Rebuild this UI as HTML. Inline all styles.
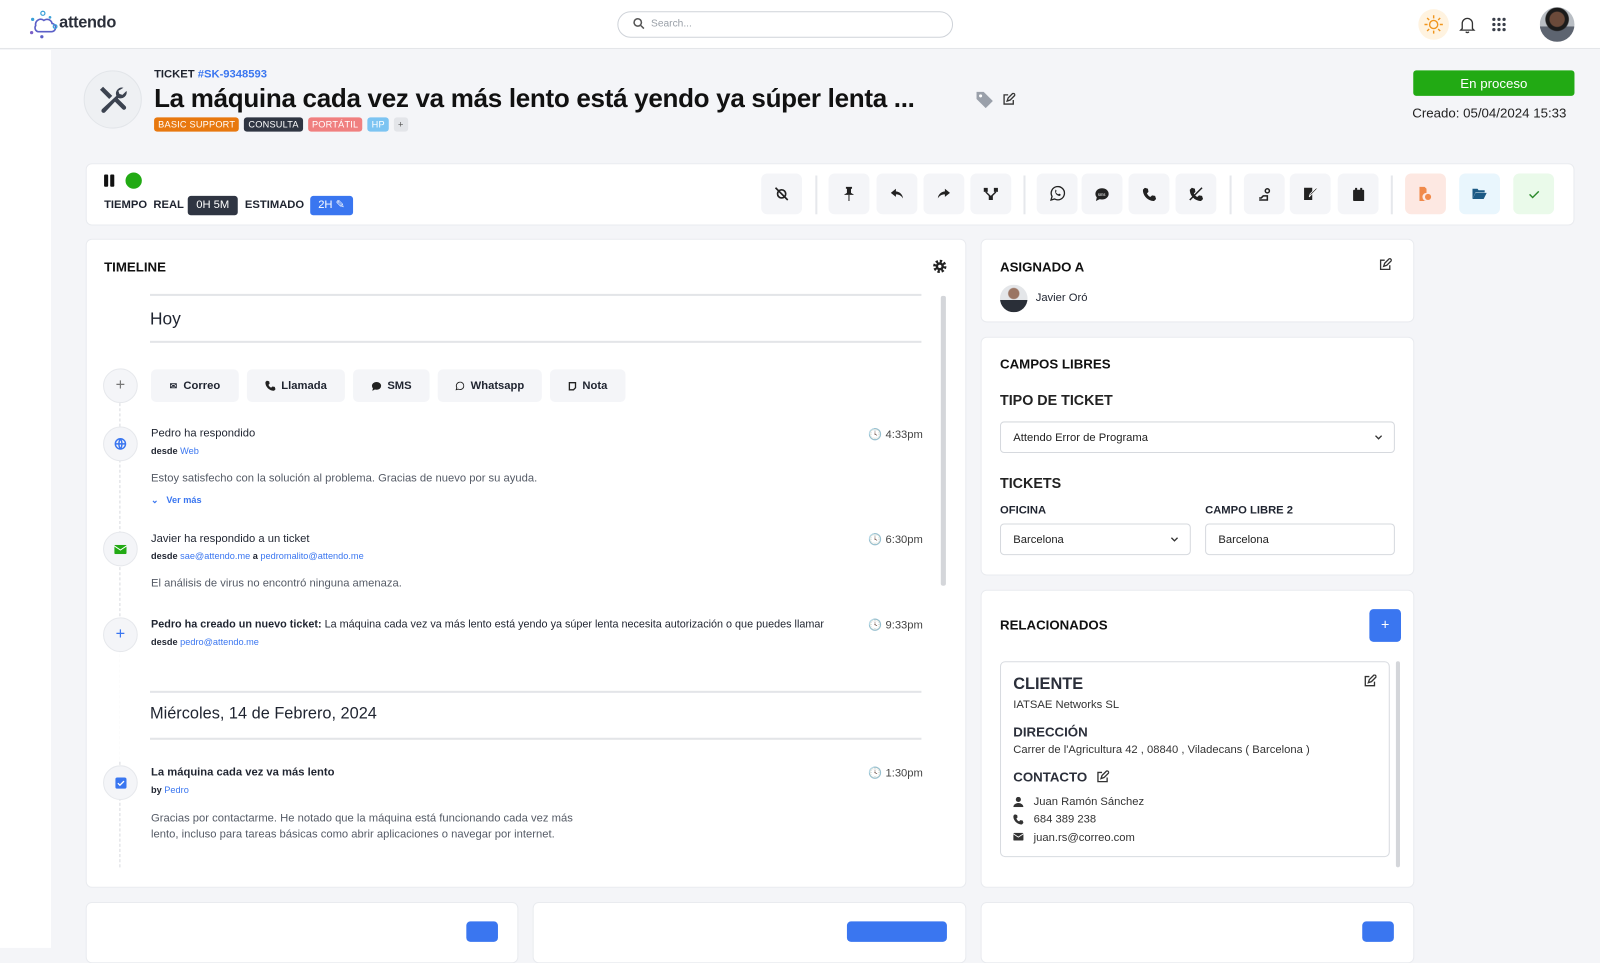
<!DOCTYPE html>
<html><head><meta charset="utf-8"><style>
*{box-sizing:border-box;margin:0;padding:0}
body{width:1600px;height:929px;overflow:hidden;background:#f4f5f8;font-family:"Liberation Sans",sans-serif;color:#1f2430;position:relative}
#w{position:absolute;left:0;top:0;width:1568px;height:911px;transform:scale(1.0204);transform-origin:0 0}
.a{position:absolute}
.card{position:absolute;background:#fff;border:1px solid #e9ebef;border-radius:6px}
.tag{display:inline-block;font-size:9px;padding:2px 4px;border-radius:3px;color:#fff;margin-right:5px;letter-spacing:.2px}
.tb{position:absolute;top:170px;width:40px;height:40px;border-radius:6px;background:#f4f5f8;display:flex;align-items:center;justify-content:center}
.sep{position:absolute;top:172px;width:2px;height:38px;background:#e6e8ec}
.btn{position:absolute;top:362px;height:32px;background:#f4f5f8;border-radius:5px;font-size:11px;font-weight:bold;display:flex;align-items:center;justify-content:center;gap:6px;color:#1f2430}
.circ{position:absolute;width:34px;height:34px;border-radius:50%;background:#f4f5f8;border:1px solid #e6e8ec;display:flex;align-items:center;justify-content:center;color:#3a76f0;font-size:16px}
.t{position:absolute;font-size:11px;color:#1f2430}
.s{font-size:9px;font-weight:bold}
.lnk{color:#3a76f0;font-weight:normal}
.g{color:#555b66}
.h{position:absolute;font-size:13px;font-weight:bold;color:#111}
.inp{position:absolute;height:31px;border:1px solid #d6d9de;border-radius:4px;font-size:11px;padding:9px 12px;color:#222}
.chev{position:absolute;right:10px;top:9px}
</style></head><body><div id="w">
<!-- header -->
<div class="a" style="left:0;top:0;width:1600px;height:48px;background:#fff;border-bottom:1px solid #e3e5e9"></div>
<svg class="a" style="left:28px;top:10px" width="30" height="28" viewBox="0 0 30 28"><path d="M7 15a5 5 0 0 1 8-5 5 5 0 0 1 8 3 4 4 0 0 1-1 8H9a4 4 0 0 1-2-6z" fill="none" stroke="#5b5fc7" stroke-width="1.6"/><circle cx="14" cy="3" r="2" fill="none" stroke="#3aa0d8" stroke-width="1.2"/><circle cx="4" cy="9" r="1.6" fill="#3aa0d8"/><circle cx="26" cy="16" r="1.8" fill="none" stroke="#3aa0d8" stroke-width="1.2"/><circle cx="3" cy="22" r="1.6" fill="#7b5fc7"/><circle cx="13" cy="26" r="1.6" fill="#5b5fc7"/><circle cx="21" cy="7" r="1.3" fill="#3aa0d8"/></svg>
<div class="a" style="left:58px;top:14px;font-size:16px;font-weight:bold;color:#2b2f3a;letter-spacing:-.3px">attendo</div>
<div class="a" style="left:605px;top:11px;width:329px;height:26px;border:1px solid #cfd3d9;border-radius:13px;font-size:10px;color:#9aa0a8;padding:6px 0 0 32px">Search...</div>
<svg class="a" style="left:620px;top:17px" width="12" height="12" viewBox="0 0 12 12"><circle cx="5" cy="5" r="3.6" fill="none" stroke="#555" stroke-width="1.5"/><path d="M8 8l3 3" stroke="#555" stroke-width="1.5"/></svg>
<div class="a" style="left:1390px;top:9px;width:30px;height:30px;border-radius:50%;background:#fff3e0"></div>
<svg class="a" style="left:1395px;top:14px" width="20" height="20" viewBox="0 0 20 20" stroke="#f0961e" stroke-width="1.4" fill="none"><circle cx="10" cy="10" r="4"/><path d="M10 1v3M10 16v3M1 10h3M16 10h3M3.6 3.6l2 2M14.4 14.4l2 2M3.6 16.4l2-2M14.4 5.6l2-2"/></svg>
<svg class="a" style="left:1430px;top:15px" width="16" height="18" viewBox="0 0 16 18" fill="none" stroke="#333" stroke-width="1.3"><path d="M3 13V8a5 5 0 0 1 10 0v5l1.5 1.5h-13z"/><path d="M6.5 16a1.7 1.7 0 0 0 3 0"/></svg>
<svg class="a" style="left:1462px;top:17px" width="14" height="14" viewBox="0 0 14 14" fill="#3a3f4a"><circle cx="2" cy="2" r="1.6"/><circle cx="7" cy="2" r="1.6"/><circle cx="12" cy="2" r="1.6"/><circle cx="2" cy="7" r="1.6"/><circle cx="7" cy="7" r="1.6"/><circle cx="12" cy="7" r="1.6"/><circle cx="2" cy="12" r="1.6"/><circle cx="7" cy="12" r="1.6"/><circle cx="12" cy="12" r="1.6"/></svg>
<div class="a" style="left:1509px;top:7px;width:34px;height:34px;border-radius:50%;background:radial-gradient(circle at 50% 35%,#6b4a3a 0 7px,#1b1b1b 8px 11px,transparent 12px),linear-gradient(#b9bec4 55%,#5d6470 56%);"></div>
<!-- sidebar -->
<div class="a" style="left:0;top:49px;width:50px;height:880px;background:#fff"></div>

<!-- ticket header -->
<div class="a" style="left:82px;top:69px;width:57px;height:57px;border-radius:50%;background:#eef0f3;border:1px solid #e2e5e9"></div>
<svg class="a" style="left:95px;top:82px" width="30" height="30" viewBox="0 0 30 30" fill="#3c4350"><path d="M3 6l3-3 9 9-3 3z"/><path d="M17 17l3-3 8 8a2.1 2.1 0 0 1-3 3z"/><path d="M26 4a6 6 0 0 0-7 8L5 25a2.1 2.1 0 0 0 3 3l13-14a6 6 0 0 0 8-7l-4 4-3-1-1-3z"/></svg>
<div class="a" style="left:151px;top:67px;font-size:11px;font-weight:bold">TICKET <span style="color:#3a76f0">#SK-9348593</span></div>
<div class="a" style="left:151px;top:83px;font-size:25.5px;font-weight:bold;color:#111;letter-spacing:-.3px">La máquina cada vez va más lento está yendo ya súper lenta ...</div>
<div class="a" style="left:151px;top:115px;font-size:0">
<span class="tag" style="background:#e8780e">BASIC SUPPORT</span><span class="tag" style="background:#2f3542">CONSULTA</span><span class="tag" style="background:#f07f7f">PORTÁTIL</span><span class="tag" style="background:#7cc4f2">HP</span><span class="tag" style="background:#e3e5e9;color:#555">+</span></div>
<svg class="a" style="left:956px;top:89px" width="18" height="17" viewBox="0 0 18 17"><path d="M1 1h7l9 9-7 7-9-9z" fill="#9aa0aa"/><circle cx="5" cy="5" r="1.5" fill="#fff"/></svg>
<svg class="a" style="left:983px;top:91px" width="12" height="12" viewBox="0 0 12 12" fill="none" stroke="#333" stroke-width="1.3"><path d="M5 2H1v9h9V7"/><path d="M4 8l1-3 5-5 2 2-5 5z"/></svg>
<div class="a" style="left:1385px;top:69px;width:158px;height:25px;background:#22aa14;border-radius:3px;color:#fff;font-size:13px;text-align:center;line-height:25px">En proceso</div>
<div class="a" style="left:1384px;top:103px;font-size:13px;color:#222">Creado: 05/04/2024 15:33</div>

<!-- toolbar -->
<div class="card" style="left:84px;top:160px;width:1459px;height:61px"></div>
<div class="a" style="left:102px;top:171px;width:4px;height:12px;background:#111;border-radius:1px"></div>
<div class="a" style="left:108px;top:171px;width:4px;height:12px;background:#111;border-radius:1px"></div>
<div class="a" style="left:123px;top:169px;width:16px;height:16px;border-radius:50%;background:#22aa14"></div>
<div class="a" style="left:102px;top:195px;font-size:11px;font-weight:bold">TIEMPO&nbsp; REAL</div>
<div class="a" style="left:184px;top:192px;width:49px;height:19px;background:#2f3542;border-radius:3px;color:#fff;font-size:11px;text-align:center;line-height:19px">0H 5M</div>
<div class="a" style="left:240px;top:195px;font-size:11px;font-weight:bold">ESTIMADO</div>
<div class="a" style="left:304px;top:192px;width:42px;height:19px;background:#3a76f0;border-radius:3px;color:#fff;font-size:11px;text-align:center;line-height:19px">2H ✎</div>

<div class="tb" style="left:746px"><svg width="14" height="14" viewBox="0 0 14 14" fill="none" stroke="#222" stroke-width="1.6"><circle cx="7" cy="7" r="4"/><path d="M1 1l12 12"/></svg></div>
<div class="sep" style="left:799px"></div>
<div class="tb" style="left:812px"><svg width="10" height="14" viewBox="0 0 10 14" fill="#222"><path d="M2 0h6v2H7v4l3 2H0l3-2V2H2z"/><path d="M4.5 8h1v6h-1z"/></svg></div>
<div class="tb" style="left:859px"><svg width="12" height="12" viewBox="0 0 12 12" fill="#222"><path d="M5 1L0 5l5 4V6.5c3 0 5 1 7 4-0.5-4-3-6.5-7-7z"/></svg></div>
<div class="tb" style="left:905px"><svg width="12" height="12" viewBox="0 0 12 12" fill="#222"><path d="M7 1l5 4-5 4V6.5c-3 0-5 1-7 4 .5-4 3-6.5 7-7z"/></svg></div>
<div class="tb" style="left:951px"><svg width="14" height="12" viewBox="0 0 14 12" fill="#222"><rect x="0" y="0" width="4" height="4"/><rect x="10" y="0" width="4" height="4"/><rect x="5" y="8" width="4" height="4"/><path d="M2 4l5 5 5-5" stroke="#222" fill="none" stroke-width="1.4"/></svg></div>
<div class="sep" style="left:1003px"></div>
<div class="tb" style="left:1016px"><svg width="16" height="16" viewBox="0 0 16 16" fill="none" stroke="#222" stroke-width="1.3"><path d="M2 14l1-3.5A6.5 6.5 0 1 1 5.5 13z"/><path d="M6 5c0 3 2 5 5 5l.5-1.5-1.5-.8-1 .8c-1-.5-2-1.5-2.3-2.3l.8-1-.8-1.5z" fill="#222" stroke="none"/></svg></div>
<div class="tb" style="left:1060px"><svg width="14" height="13" viewBox="0 0 14 13" fill="#222"><ellipse cx="7" cy="6" rx="6.5" ry="5.5"/><path d="M2 9l-1 4 4-2z"/><text x="3" y="8" font-size="4" fill="#fff" font-family="Liberation Sans">sms</text></svg></div>
<div class="tb" style="left:1106px"><svg width="13" height="13" viewBox="0 0 13 13" fill="#222"><path d="M2 0l3 1 .5 3L4 5.5c1 2 2 3 3.5 3.5L9 7.5l3 .5 1 3-2 2C5 13 0 8 0 2z"/></svg></div>
<div class="tb" style="left:1152px"><svg width="14" height="14" viewBox="0 0 14 14" fill="#222"><path d="M3 1l3 1 .5 3L5 6.5c1 2 2 3 3.5 3.5L10 8.5l3 .5 1 3-2 2C6 14 1 9 1 3z"/><path d="M1 13L13 1" stroke="#222" stroke-width="1.5"/></svg></div>
<div class="sep" style="left:1205px"></div>
<div class="tb" style="left:1219px"><svg width="13" height="13" viewBox="0 0 13 13" fill="none" stroke="#222" stroke-width="1.5"><circle cx="9" cy="3" r="2"/><path d="M1 12h8V8H5l-2 2H1"/></svg></div>
<div class="tb" style="left:1264px"><svg width="14" height="14" viewBox="0 0 14 14" fill="#222"><rect x="1" y="1" width="8" height="12"/><path d="M6 10l1-3 6-6 1 1-6 6z" stroke="#fff" stroke-width=".8"/></svg></div>
<div class="tb" style="left:1311px"><svg width="11" height="13" viewBox="0 0 11 13" fill="#222"><rect x="0" y="2" width="11" height="11" rx="1"/><rect x="2" y="0" width="2" height="3"/><rect x="7" y="0" width="2" height="3"/></svg></div>
<div class="sep" style="left:1363px"></div>
<div class="tb" style="left:1377px;background:#fde8e2"><svg width="12" height="14" viewBox="0 0 12 14" fill="#f08a4b"><path d="M0 0h5l2 2v4a4 4 0 0 0 0 8H0z"/><circle cx="8.5" cy="10" r="3"/></svg></div>
<div class="tb" style="left:1430px;background:#e9f6fd"><svg width="14" height="12" viewBox="0 0 14 12" fill="#1c5a85"><path d="M0 1h5l1 1.5h6v2H3L0 11z"/><path d="M3 5h11l-3 6H0z"/></svg></div>
<div class="tb" style="left:1483px;background:#eafaea"><svg width="11" height="9" viewBox="0 0 11 9" fill="none" stroke="#2c8a2c" stroke-width="1.4"><path d="M1 4.5l3 3 6-6"/></svg></div>

<!-- timeline card -->
<div class="card" style="left:84px;top:234px;width:863px;height:636px"></div>
<div class="h" style="left:102px;top:254px">TIMELINE</div>
<svg class="a" style="left:914px;top:254px" width="14" height="14" viewBox="0 0 14 14"><circle cx="7" cy="7" r="5" fill="none" stroke="#222" stroke-width="3" stroke-dasharray="2.2 1.7"/><circle cx="7" cy="7" r="4" fill="#222"/><circle cx="7" cy="7" r="1.6" fill="#fff"/></svg>
<div class="a" style="left:147px;top:288px;width:756px;height:2px;background:#e3e5e8"></div>
<div class="a" style="left:147px;top:303px;font-size:17px">Hoy</div>
<div class="a" style="left:147px;top:334px;width:756px;height:2px;background:#e3e5e8"></div>
<div class="a" style="left:922px;top:290px;width:5px;height:284px;background:#d4d6da;border-radius:2px"></div>
<div class="a" style="left:117px;top:380px;width:0;height:470px;border-left:1px dashed #d8dade"></div>
<div class="a" style="left:117px;top:640px;width:4px;height:105px;background:#fff"></div>

<div class="circ" style="left:101px;top:361px;color:#777">+</div>
<div class="btn" style="left:148px;width:86px"><span style="font-size:9px">✉</span>Correo</div>
<div class="btn" style="left:242px;width:96px"><svg width="10" height="10" viewBox="0 0 13 13" fill="#222"><path d="M2 0l3 1 .5 3L4 5.5c1 2 2 3 3.5 3.5L9 7.5l3 .5 1 3-2 2C5 13 0 8 0 2z"/></svg>Llamada</div>
<div class="btn" style="left:346px;width:75px"><svg width="10" height="9" viewBox="0 0 14 13" fill="#222"><ellipse cx="7" cy="6" rx="6.5" ry="5.5"/><path d="M2 9l-1 4 4-2z"/></svg>SMS</div>
<div class="btn" style="left:429px;width:102px"><svg width="9" height="9" viewBox="0 0 16 16" fill="none" stroke="#222" stroke-width="1.6"><path d="M2 14l1-3.5A6.5 6.5 0 1 1 5.5 13z"/></svg>Whatsapp</div>
<div class="btn" style="left:539px;width:74px"><svg width="8" height="9" viewBox="0 0 8 9" fill="none" stroke="#222" stroke-width="1.3"><path d="M1 1h6v5L5 8H1z"/></svg>Nota</div>

<div class="circ" style="left:101px;top:418px"><svg width="12" height="12" viewBox="0 0 12 12" fill="none" stroke="#3a76f0" stroke-width="1.4"><circle cx="6" cy="6" r="5"/><path d="M1 6h10M6 1c-2 3-2 7 0 10M6 1c2 3 2 7 0 10"/></svg></div>
<div class="t" style="left:148px;top:419px">Pedro ha respondido</div>
<div class="t s" style="left:148px;top:437px">desde <span class="lnk">Web</span></div>
<div class="t g" style="left:148px;top:463px">Estoy satisfecho con la solución al problema. Gracias de nuevo por su ayuda.</div>
<div class="t" style="left:148px;top:485px;font-size:9px;color:#3a76f0;font-weight:bold">⌄&nbsp;&nbsp; Ver más</div>
<div class="t g" style="left:851px;top:419px;color:#444">🕓 4:33pm</div>

<div class="circ" style="left:101px;top:521px"><svg width="12" height="9" viewBox="0 0 12 9"><rect width="12" height="9" rx="1" fill="#22aa14"/><path d="M0 1l6 4 6-4" stroke="#fff" fill="none"/></svg></div>
<div class="t" style="left:148px;top:522px">Javier ha respondido a un ticket</div>
<div class="t s" style="left:148px;top:540px">desde <span class="lnk">sae@attendo.me</span> a <span class="lnk">pedromalito@attendo.me</span></div>
<div class="t g" style="left:148px;top:566px">El análisis de virus no encontró ninguna amenaza.</div>
<div class="t" style="left:851px;top:522px;color:#444">🕓 6:30pm</div>

<div class="circ" style="left:101px;top:605px">+</div>
<div class="t" style="left:148px;top:606px;font-size:10.6px"><b>Pedro ha creado un nuevo ticket:</b> La máquina cada vez va más lento está yendo ya súper lenta necesita autorización o que puedes llamar</div>
<div class="t s" style="left:148px;top:624px">desde <span class="lnk">pedro@attendo.me</span></div>
<div class="t" style="left:851px;top:606px;color:#444">🕓 9:33pm</div>

<div class="a" style="left:147px;top:677px;width:756px;height:2px;background:#e3e5e8"></div>
<div class="a" style="left:147px;top:691px;font-size:16px">Miércoles, 14 de Febrero, 2024</div>
<div class="a" style="left:147px;top:723px;width:756px;height:2px;background:#e3e5e8"></div>

<div class="circ" style="left:101px;top:750px"><svg width="11" height="11" viewBox="0 0 11 11"><rect width="11" height="11" rx="2" fill="#3a76f0"/><path d="M2.5 5.5l2 2 4-4" stroke="#fff" fill="none" stroke-width="1.3"/></svg></div>
<div class="t" style="left:148px;top:751px;font-weight:bold">La máquina cada vez va más lento</div>
<div class="t s" style="left:148px;top:769px">by <span class="lnk">Pedro</span></div>
<div class="t g" style="left:148px;top:794px;line-height:16px">Gracias por contactarme. He notado que la máquina está funcionando cada vez más<br>lento, incluso para tareas básicas como abrir aplicaciones o navegar por internet.</div>
<div class="t" style="left:851px;top:751px;color:#444">🕓 1:30pm</div>

<!-- right cards -->
<div class="card" style="left:961px;top:234px;width:425px;height:82px"></div>
<div class="h" style="left:980px;top:254px">ASIGNADO A</div>
<svg class="a" style="left:1352px;top:253px" width="12" height="12" viewBox="0 0 12 12" fill="none" stroke="#333" stroke-width="1.3"><path d="M5 2H1v9h9V7"/><path d="M4 8l1-3 5-5 2 2-5 5z"/></svg>
<div class="a" style="left:980px;top:279px;width:27px;height:27px;border-radius:50%;background:radial-gradient(circle at 50% 32%,#9a7462 0 5px,transparent 6px),linear-gradient(#e4e6e9 55%,#2a2f38 56%)"></div>
<div class="t" style="left:1015px;top:286px">Javier Oró</div>

<div class="card" style="left:961px;top:330px;width:425px;height:234px"></div>
<div class="h" style="left:980px;top:349px">CAMPOS LIBRES</div>
<div class="h" style="left:980px;top:384px;font-size:14px;color:#222">TIPO DE TICKET</div>
<div class="inp" style="left:980px;top:413px;width:387px">Attendo Error de Programa<svg class="chev" width="10" height="10" viewBox="0 0 10 10" fill="none" stroke="#333" stroke-width="1.3"><path d="M2 4l3 3 3-3"/></svg></div>
<div class="h" style="left:980px;top:465px;font-size:14px;color:#222">TICKETS</div>
<div class="t" style="left:980px;top:494px;font-weight:bold;font-size:11px">OFICINA</div>
<div class="t" style="left:1181px;top:494px;font-weight:bold;font-size:11px">CAMPO LIBRE 2</div>
<div class="inp" style="left:980px;top:513px;width:187px">Barcelona<svg class="chev" width="10" height="10" viewBox="0 0 10 10" fill="none" stroke="#333" stroke-width="1.3"><path d="M2 4l3 3 3-3"/></svg></div>
<div class="inp" style="left:1181px;top:513px;width:186px">Barcelona</div>

<div class="card" style="left:961px;top:578px;width:425px;height:292px"></div>
<div class="h" style="left:980px;top:605px">RELACIONADOS</div>
<div class="a" style="left:1342px;top:597px;width:31px;height:32px;background:#3a76f0;border-radius:4px;color:#fff;text-align:center;line-height:31px;font-size:14px">+</div>
<div class="a" style="left:980px;top:648px;width:382px;height:192px;border:1px solid #d8dbe0;border-radius:5px"></div>
<div class="a" style="left:1368px;top:648px;width:4px;height:202px;background:#d4d6da;border-radius:2px"></div>
<div class="a" style="left:993px;top:662px;font-size:16px;font-weight:bold;color:#2b2f3a">CLIENTE</div>
<svg class="a" style="left:1337px;top:661px" width="12" height="12" viewBox="0 0 12 12" fill="none" stroke="#333" stroke-width="1.3"><path d="M5 2H1v9h9V7"/><path d="M4 8l1-3 5-5 2 2-5 5z"/></svg>
<div class="t g" style="left:993px;top:685px;color:#333">IATSAE Networks SL</div>
<div class="a" style="left:993px;top:710px;font-size:13px;font-weight:bold;color:#2b2f3a">DIRECCIÓN</div>
<div class="t" style="left:993px;top:729px;color:#333">Carrer de l'Agricultura 42 , 08840 , Viladecans ( Barcelona )</div>
<div class="a" style="left:993px;top:754px;font-size:13px;font-weight:bold;color:#2b2f3a">CONTACTO</div>
<svg class="a" style="left:1075px;top:755px" width="12" height="12" viewBox="0 0 12 12" fill="none" stroke="#333" stroke-width="1.3"><path d="M5 2H1v9h9V7"/><path d="M4 8l1-3 5-5 2 2-5 5z"/></svg>
<svg class="a" style="left:993px;top:781px" width="10" height="10" viewBox="0 0 10 10" fill="#333"><circle cx="5" cy="2.5" r="2.5"/><path d="M0 10a5 4 0 0 1 10 0z"/></svg>
<div class="t" style="left:1013px;top:780px;color:#333">Juan Ramón Sánchez</div>
<svg class="a" style="left:993px;top:798px" width="10" height="10" viewBox="0 0 13 13" fill="#333"><path d="M2 0l3 1 .5 3L4 5.5c1 2 2 3 3.5 3.5L9 7.5l3 .5 1 3-2 2C5 13 0 8 0 2z"/></svg>
<div class="t" style="left:1013px;top:797px;color:#333">684 389 238</div>
<svg class="a" style="left:993px;top:816px" width="10" height="8" viewBox="0 0 12 9"><rect width="12" height="9" rx="1" fill="#333"/><path d="M0 1l6 4 6-4" stroke="#fff" fill="none"/></svg>
<div class="t" style="left:1013px;top:815px;color:#333">juan.rs@correo.com</div>

<!-- bottom cards -->
<div class="card" style="left:84px;top:884px;width:424px;height:60px"></div>
<div class="a" style="left:457px;top:903px;width:31px;height:20px;background:#3a76f0;border-radius:4px"></div>
<div class="card" style="left:522px;top:884px;width:425px;height:60px"></div>
<div class="a" style="left:830px;top:903px;width:98px;height:20px;background:#3a76f0;border-radius:4px"></div>
<div class="card" style="left:961px;top:884px;width:425px;height:60px"></div>
<div class="a" style="left:1335px;top:903px;width:31px;height:20px;background:#3a76f0;border-radius:4px"></div>
</div></body></html>
